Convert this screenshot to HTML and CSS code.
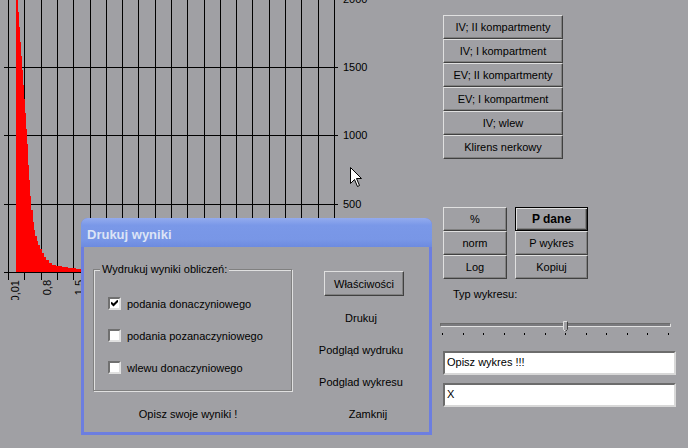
FILE: index.html
```html
<!DOCTYPE html>
<html lang="pl">

<head>
  <meta charset="UTF-8">
  <title>Farmakokinetyka</title>
  <link rel="stylesheet" href="styles.css">
</head>

<body>
  <div class="app">
    <div class="chart">
      <svg class="plot" width="440" height="300" viewBox="0 0 440 300">
        <path class="grid" d="M8.5 0V280M24.5 0V280M41.5 0V280M57.5 0V280M73.5 0V280M90.5 0V280M106.5 0V280M122.5 0V280M138.5 0V280M155.5 0V280M171.5 0V280M187.5 0V280M204.5 0V280M220.5 0V280M236.5 0V280M252.5 0V280M269.5 0V280M285.5 0V280M301.5 0V280M318.5 0V280M334.5 0V280" />
        <path class="grid" d="M4 67.5H338M4 135.5H338M4 204.5H338" />
        <polygon class="curve" points="16,0 18,0 18,12 19,12 19,27 20,27 20,42 21,42 21,56 22,56 22,70 23,70 23,85 24,85 24,99 25,99 25,113 26,113 26,129 27,129 27,144 28,144 28,165 29,165 29,180 30,180 30,196 31,196 31,210 33,210 33,222 34,222 34,230 35,230 35,236 37,236 37,241 38,241 38,245 40,245 40,249 42,249 42,253 44,253 44,257 46,257 46,260 49,260 49,263 52,263 52,265 56,265 56,266 62,266 62,267 68,267 68,268 76,268 76,269 90,269 90,272 16,272" />
        <path class="grid" d="M4 272.5H338" />
        <text class="ylabel" x="343" y="-1">2000</text>
        <text class="ylabel" x="343" y="67">1500</text>
        <text class="ylabel" x="343" y="135">1000</text>
        <text class="ylabel" x="343" y="204">500</text>
        <text class="xlabel" transform="translate(19,280) rotate(-90)">0,01</text>
        <text class="xlabel" transform="translate(51,280) rotate(-90)">0,8</text>
        <text class="xlabel" transform="translate(83,280) rotate(-90)">1,5</text>
      </svg>
    </div>

    <div class="panel">
      <div class="stack">
        <button class="btn">IV; II kompartmenty</button>
        <button class="btn">IV; I kompartment</button>
        <button class="btn">EV; II kompartmenty</button>
        <button class="btn">EV; I kompartment</button>
        <button class="btn">IV; wlew</button>
        <button class="btn">Klirens nerkowy</button>
      </div>

      <div class="tools">
        <button class="btn">%</button>
        <button class="btn default">P dane</button>
        <button class="btn">norm</button>
        <button class="btn">P wykres</button>
        <button class="btn">Log</button>
        <button class="btn">Kopiuj</button>
      </div>

      <div class="caption-type">Typ wykresu:</div>

      <div class="slider">
        <div class="track"></div>
        <svg class="thumb" width="5" height="11" viewBox="0 0 5 11">
          <path d="M0.5 0.5H4.5V8.5L2.5 10.5L0.5 8.5Z" fill="#a0a0a4" stroke="#e0e0e0" />
          <path d="M4.5 0.5V8.5L2.5 10.5" fill="none" stroke="#404040" />
        </svg>
        <div class="ticks">
          <i></i><i></i><i></i><i></i><i></i><i></i><i></i><i></i><i></i><i></i><i></i><i></i>
        </div>
      </div>

      <div class="field">Opisz wykres !!!</div>
      <div class="field">X</div>
    </div>
  </div>

  <svg class="cursor" width="13" height="21" viewBox="0 0 13 21">
    <path d="M0.5 0.5V16.5L4.5 12.5L7.5 19.5L9.5 18.5L6.5 11.5H11.5Z" fill="#fff" stroke="#000" />
  </svg>

  <div class="dialog">
    <div class="titlebar">Drukuj wyniki</div>
    <div class="client">
      <div class="col-left">
        <div class="group">
          <span class="legend">Wydrukuj wyniki obliczeń:</span>
          <label class="check"><span class="box"><svg width="7" height="7" viewBox="0 0 7 7"><path d="M0 2.5L2.5 5L7 0.5" fill="none" stroke="#000" stroke-width="2" /></svg></span>podania donaczyniowego</label>
          <label class="check"><span class="box"></span>podania pozanaczyniowego</label>
          <label class="check"><span class="box"></span>wlewu donaczyniowego</label>
        </div>
        <div class="link">Opisz swoje wyniki !</div>
      </div>
      <div class="col-right">
        <button class="btn props">Właściwości</button>
        <div class="link first">Drukuj</div>
        <div class="link">Podgląd wydruku</div>
        <div class="link">Podglad wykresu</div>
        <div class="link close">Zamknij</div>
      </div>
    </div>
  </div>
</body>

</html>
```

FILE: styles.css
```css
* {
  margin: 0;
  padding: 0;
  box-sizing: border-box;
}

body {
  width: 688px;
  height: 448px;
  overflow: hidden;
  background: #a0a0a4;
  font: 11px 'Liberation Sans', Arial, sans-serif;
  color: #000;
  position: relative;
}

.app {
  display: flex;
}

.chart {
  width: 440px;
  height: 448px;
}

.plot {
  display: block;
}

.grid {
  stroke: #000;
  stroke-width: 1;
  fill: none;
  shape-rendering: crispEdges;
}

.curve {
  fill: #ff0000;
  shape-rendering: crispEdges;
}

.ylabel {
  font: 11px 'Liberation Sans', Arial, sans-serif;
  dominant-baseline: central;
}

.xlabel {
  font: 11px 'Liberation Sans', Arial, sans-serif;
  text-anchor: end;
}

.panel {
  display: flex;
  flex-direction: column;
  padding: 15px 0 0 3px;
}

.btn {
  font: inherit;
  color: #000;
  background: #a0a0a4;
  border: 1px solid;
  border-color: #e0e0e0 #404040 #404040 #e0e0e0;
  box-shadow: inset -1px -1px #808080;
  height: 24px;
  text-align: center;
}

.stack {
  display: flex;
  flex-direction: column;
  width: 120px;
}

.tools {
  display: grid;
  grid-template-columns: 64px 73px;
  column-gap: 8px;
  margin-top: 48px;
}

.default {
  font-weight: bold;
  font-size: 12px;
  border-color: #000;
  box-shadow: inset 1px 1px #e0e0e0, inset -1px -1px #404040, inset -2px -2px #808080;
}

.caption-type {
  margin: 8px 0 0 10px;
  line-height: 14px;
}

.slider {
  position: relative;
  width: 231px;
  height: 18px;
  margin: 18px 0 0 -3px;
}

.track {
  margin-top: 4px;
  height: 4px;
  border: 1px solid;
  border-color: #6c6c6c #e0e0e0 #e0e0e0 #6c6c6c;
  background: #7a7a7e;
}

.thumb {
  position: absolute;
  left: 123px;
  top: 2px;
}

.ticks {
  display: flex;
  justify-content: space-between;
  padding: 0 2px;
  margin-top: 6px;
}

.ticks i {
  width: 1px;
  height: 2px;
  background: #000;
}

.field {
  width: 233px;
  height: 24px;
  margin-top: 14px;
  padding: 2px 2px;
  background: #fff;
  border: 2px solid;
  border-color: #6c6c6c #d8d8d8 #d8d8d8 #6c6c6c;
  font-size: 11px;
  line-height: 15px;
}

.field + .field {
  margin-top: 8px;
}

.cursor {
  position: absolute;
  left: 350px;
  top: 167px;
}

.dialog {
  position: absolute;
  left: 81px;
  top: 218px;
  width: 351px;
  height: 217px;
  background: #6c7ee0;
  border-radius: 7px 7px 0 0;
  display: flex;
  flex-direction: column;
}

.titlebar {
  height: 29px;
  padding: 4px 0 0 6px;
  display: flex;
  align-items: center;
  border-radius: 7px 7px 0 0;
  background: linear-gradient(#93abee, #7a98e8 25%, #7896e6 75%, #6d8be0);
  color: #dce4f6;
  font: bold 13px 'Liberation Sans', Arial, sans-serif;
}

.client {
  flex: 1;
  margin: 0 3px 3px;
  background: #a0a0a4;
  display: flex;
  gap: 32px;
  padding: 22px 0 0 9px;
}

.col-left {
  display: flex;
  flex-direction: column;
  width: 199px;
}

.group {
  position: relative;
  height: 122px;
  border: 1px solid #808080;
  box-shadow: 1px 1px 0 #e0e0e0, inset 1px 1px 0 #e0e0e0;
  display: flex;
  flex-direction: column;
  gap: 19px;
  padding: 27px 0 0 14px;
}

.legend {
  position: absolute;
  left: 6px;
  top: -8px;
  padding: 0 2px;
  background: #a0a0a4;
  line-height: 14px;
}

.check {
  display: flex;
  align-items: center;
  gap: 6px;
  height: 13px;
}

.box {
  width: 13px;
  height: 13px;
  background: #fff;
  border: 2px solid;
  border-color: #707070 #e0e0e0 #e0e0e0 #707070;
  display: flex;
  align-items: center;
  justify-content: center;
}

.box svg {
  display: block;
}

.link {
  height: 32px;
  display: flex;
  align-items: center;
  justify-content: center;
  white-space: nowrap;
}

.col-left .link {
  margin-top: 7px;
  padding-right: 9px;
}

.col-right {
  display: flex;
  flex-direction: column;
  width: 80px;
}

.props {
  height: 25px;
  margin-top: 2px;
}

.col-right .link {
  margin-right: 6px;
}

.col-right .first {
  margin-top: 6px;
}

.col-right .close {
  margin: 0 -8px 0 0;
}
```
